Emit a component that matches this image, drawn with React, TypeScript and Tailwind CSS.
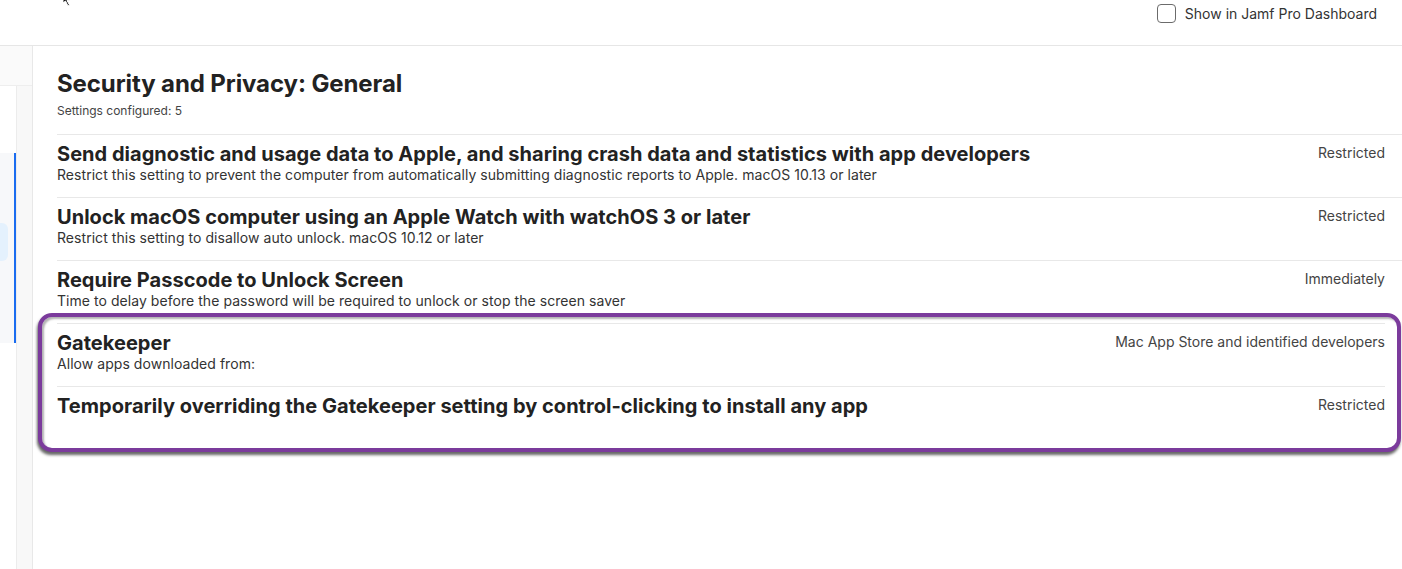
const settings = [
  {
    title: 'Send diagnostic and usage data to Apple, and sharing crash data and statistics with app developers',
    desc: 'Restrict this setting to prevent the computer from automatically submitting diagnostic reports to Apple. macOS 10.13 or later',
    value: 'Restricted',
  },
  {
    title: 'Unlock macOS computer using an Apple Watch with watchOS 3 or later',
    desc: 'Restrict this setting to disallow auto unlock. macOS 10.12 or later',
    value: 'Restricted',
  },
  {
    title: 'Require Passcode to Unlock Screen',
    desc: 'Time to delay before the password will be required to unlock or stop the screen saver',
    value: 'Immediately',
  },
]

const highlighted = [
  {
    title: 'Gatekeeper',
    desc: 'Allow apps downloaded from:',
    value: 'Mac App Store and identified developers',
  },
  {
    title: 'Temporarily overriding the Gatekeeper setting by control-clicking to install any app',
    desc: '',
    value: 'Restricted',
  },
]

function Row({ s, pr }: { s: { title: string; desc: string; value: string }; pr: string }) {
  return (
    <div className={`flex justify-between border-t border-[#e8e8e8] pt-[7px] h-[63px] ${pr}`}>
      <div>
        <div className="text-[20px] leading-[24px] font-bold tracking-[0.03px] text-[#222]">{s.title}</div>
        {s.desc && <div className="text-[14px] leading-[18px] tracking-[0.05px] text-[#333]">{s.desc}</div>}
      </div>
      <div className="text-[14px] leading-[18px] text-[#444] pt-[2px] whitespace-nowrap">{s.value}</div>
    </div>
  )
}

export default function App() {
  return (
    <div className="w-[1402px] h-[569px] overflow-hidden bg-white relative" style={{ fontFamily: 'Inter, "Noto Sans", sans-serif' }}>
      {/* cursor */}
      <svg className="absolute left-[60px] top-[-6px]" width="14" height="14" viewBox="0 0 14 14">
        <path d="M3 0 L3 9 L5.5 7 L8 12 L9.5 11 L7 6.5 L10 6 Z" fill="#111" stroke="#fff" strokeWidth="1" />
      </svg>

      <header className="h-[46px] border-b border-[#e6e6e6] flex justify-end items-start pr-[25px] pt-[3px]">
        <label className="flex items-center gap-[9px]">
          <span className="w-[19px] h-[19px] rounded-[4px] border border-[#6b6b6b] bg-white" />
          <span className="text-[14px] text-[#333]">Show in Jamf Pro Dashboard</span>
        </label>
      </header>

      <div className="flex h-[523px]">
        {/* collapsed sidebar */}
        <aside className="w-[33px] border-r border-[#e8e8e8] flex flex-col">
          <div className="h-[40px] bg-[#fafafa] border-b border-[#eeeeee]" />
          <div className="flex flex-1">
            <div className="w-[17px] border-r border-[#ececec] bg-white flex flex-col">
              <div className="h-[67px]" />
              <div className="h-[190px] bg-[#f7f8fa] border-r-2 border-[#1a6cf0] pt-[70px]">
                <div className="w-[8px] h-[38px] bg-[#e4f1fd] rounded-r-[6px]" />
              </div>
            </div>
            <div className="flex-1 bg-[#f8f8f8]" />
          </div>
        </aside>

        <main className="flex-1 pl-[24px] pt-[24px]">
          <h1 className="text-[24px] leading-[28px] font-bold tracking-[-0.1px] text-[#222]">Security and Privacy: General</h1>
          <div className="text-[12px] leading-[16px] text-[#444] mt-[5px] mb-[15px]">Settings configured: 5</div>

          {settings.map((s) => (
            <Row key={s.title} s={s} pr="pr-[17px]" />
          ))}

          <div className="-mt-[10px] -ml-[19px] mr-[1px] pt-[6px] pl-[15px] pr-[12px] border-4 border-[#7b3b9c] rounded-[14px] shadow-[inset_2px_2px_2px_rgba(0,0,0,0.3),-1px_3px_3px_rgba(0,0,0,0.6)] bg-white relative">
            <Row s={highlighted[0]} pr="" />
            <div className="flex justify-between border-t border-[#e8e8e8] pt-[7px] h-[62px]">
              <div className="text-[20px] leading-[24px] font-bold tracking-[0.03px] text-[#222]">{highlighted[1].title}</div>
              <div className="text-[14px] leading-[18px] text-[#444] pt-[2px]">{highlighted[1].value}</div>
            </div>
          </div>
        </main>
      </div>
    </div>
  )
}
